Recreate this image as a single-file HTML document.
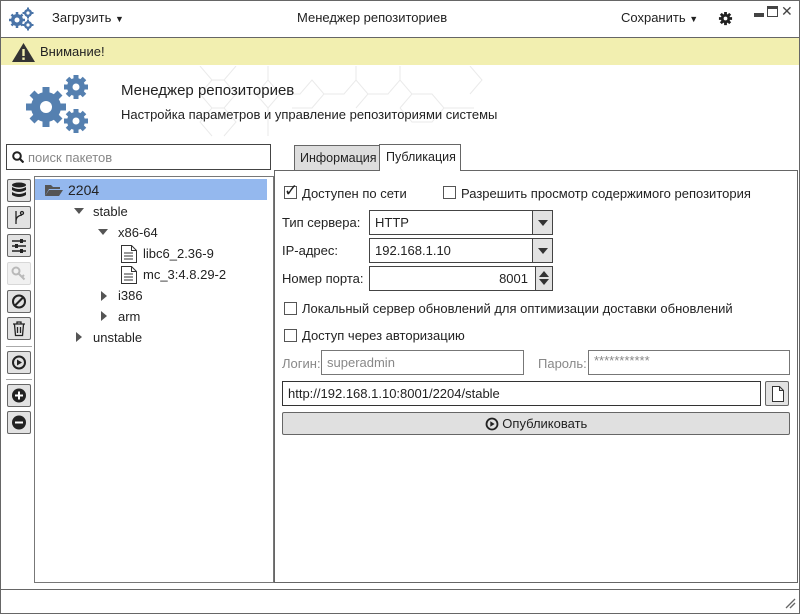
<!DOCTYPE html>
<html><head><meta charset="utf-8"><style>
*{box-sizing:border-box;margin:0;padding:0}
body{width:800px;height:614px;background:#fff;font-family:"Liberation Sans","DejaVu Sans",sans-serif;font-size:13px;color:#222;position:relative;overflow:hidden}
.a{position:absolute}
.win{left:0;top:0;width:800px;height:614px;border:1px solid #666}
.btn{position:absolute;left:7px;width:24px;height:23px;border:1px solid #666;background:#e2e2e2;border-radius:2px}
.btn svg{position:absolute;left:3px;top:2px}
.cb{position:absolute;width:13px;height:13px;border:1px solid #555;background:#fff}
.inp{position:absolute;border:1px solid #444;background:#fff;height:25px;padding:4px 5px}
.dd{position:absolute;right:0;top:0;width:20px;height:23px;border-left:1px solid #444;background:#e2e2e2}
.tri{width:0;height:0;border-left:5px solid transparent;border-right:5px solid transparent;border-top:6px solid #333;position:absolute;left:5px;top:9px}
</style></head><body>
<div class="a win"></div>
<!-- title -->
<svg class="a" style="left:8px;top:7px" width="28" height="24" viewBox="0 0 28 24"><g fill="#4a74a8"><circle cx="9" cy="13" r="6"/><circle cx="20" cy="6" r="4"/><circle cx="20" cy="18" r="4"/></g><g stroke="#4a74a8" stroke-width="2.5"><path d="M9 5v16M1 13h16M3.5 7.5l11 11M14.5 7.5l-11 11"/><path d="M20 0.5v11M14.5 6h11M20 12.5v11M14.5 18h11" stroke-width="2"/></g><g fill="#fff"><circle cx="9" cy="13" r="2.5"/><circle cx="20" cy="6" r="1.6"/><circle cx="20" cy="18" r="1.6"/></g></svg>
<div class="a" style="left:52px;top:10px">Загрузить <span style="font-size:9px">▼</span></div>
<div class="a" style="left:297px;top:10px">Менеджер репозиториев</div>
<div class="a" style="left:621px;top:10px">Сохранить <span style="font-size:9px">▼</span></div>
<svg class="a" style="left:718px;top:11px" width="15" height="15" viewBox="0 0 16 16"><circle cx="8" cy="8" r="5" fill="#222"/><g stroke="#222" stroke-width="3"><path d="M8 1v14M1 8h14M3 3l10 10M13 3L3 13"/></g><circle cx="8" cy="8" r="2" fill="#fff"/></svg>
<div class="a" style="left:754px;top:13px;width:10px;height:4px;background:#444"></div>
<div class="a" style="left:767px;top:6px;width:11px;height:11px;border:1px solid #444;border-top:3px solid #444"></div>
<div class="a" style="left:781px;top:3px;font-size:14px;color:#444">✕</div>
<div class="a" style="left:1px;top:37px;width:798px;height:1px;background:#666"></div>
<!-- warning -->
<div class="a" style="left:1px;top:38px;width:798px;height:27px;background:#f2efb0"></div>
<svg class="a" style="left:11px;top:42px" width="25" height="21"><path d="M12.5 1L24 20H1z" fill="#333"/><rect x="11.3" y="7" width="2.4" height="7" fill="#f2efb0"/><rect x="11.3" y="15.5" width="2.4" height="2.4" fill="#f2efb0"/></svg>
<div class="a" style="left:40px;top:44px">Внимание!</div>
<!-- header -->
<svg class="a" style="left:190px;top:66px" width="320" height="74" opacity=".2"><g fill="none" stroke="#999" stroke-width="1"><path d="M10 0l12 14l-12 14l12 14l-12 14l12 14M46 0l-12 14l12 14l-12 14l12 14l-12 14M22 14h12M22 42h12M46 28h20M66 28l12-14 12 14-12 14-12-14M90 28h20l12-14 12 14-12 14h-20M134 28h20l12-14 12 14-12 14M78 0v14M78 42v28M166 0v14M178 28h20l12-14 12 14-12 14M210 0v14M222 28h20l12 14-12 14h-20l-12-14M254 42h30M280 0l12 14-12 14"/></g></svg>
<svg class="a" style="left:26px;top:73px" width="66" height="62" viewBox="0 0 66 62"><g fill="#5580b0"><circle cx="20" cy="34" r="15"/><circle cx="50" cy="14" r="9"/><circle cx="50" cy="48" r="9"/><g stroke="#5580b0" stroke-width="7"><path d="M20 14v40M0 34h40M6 20l28 28M34 20L6 48"/></g><g stroke="#5580b0" stroke-width="5"><path d="M50 2v24M38 14h24M41.5 5.5l17 17M58.5 5.5l-17 17M50 36v24M38 48h24M41.5 39.5l17 17M58.5 39.5l-17 17"/></g></g><g fill="#fff"><circle cx="20" cy="34" r="6"/><circle cx="50" cy="14" r="3.5"/><circle cx="50" cy="48" r="3.5"/></g></svg>
<div class="a" style="left:121px;top:82px;font-size:15px">Менеджер репозиториев</div>
<div class="a" style="left:121px;top:107px">Настройка параметров и управление репозиториями системы</div>
<!-- search -->
<div class="a" style="left:6px;top:144px;width:265px;height:26px;border:1px solid #444"></div>
<svg class="a" style="left:12px;top:151px" width="12" height="12"><circle cx="5" cy="5" r="3.8" fill="none" stroke="#222" stroke-width="2"/><path d="M8 8l3.5 3.5" stroke="#222" stroke-width="2.2"/></svg>
<div class="a" style="left:28px;top:150px;color:#888">поиск пакетов</div>
<!-- left toolbar -->
<div class="btn" style="top:179px"><svg width="16" height="17"><g fill="#222"><ellipse cx="8" cy="3" rx="7" ry="2.5"/><path d="M1 5q7 4 14 0v3q-7 4-14 0zM1 10q7 4 14 0v3q-7 4-14 0z"/></g></svg></div>
<div class="btn" style="top:206px"><svg width="16" height="17"><g fill="none" stroke="#222" stroke-width="1.3"><path d="M5 2v13M5 12q0-5 6-6"/><circle cx="11" cy="4" r="1.5"/></g></svg></div>
<div class="btn" style="top:234px"><svg width="16" height="17"><g stroke="#222" stroke-width="1.5"><path d="M1 4h14M1 9h14M1 14h14"/></g><g fill="#222"><rect x="9" y="2" width="3" height="4"/><rect x="4" y="7" width="3" height="4"/><rect x="9" y="12" width="3" height="4"/></g></svg></div>
<div class="btn" style="top:262px;opacity:.45;border-color:#aaa"><svg width="16" height="17"><circle cx="5" cy="6" r="3.5" fill="none" stroke="#666" stroke-width="2"/><path d="M7.5 8.5l6 6M11 12l2-2" stroke="#666" stroke-width="2"/></svg></div>
<div class="btn" style="top:290px"><svg width="16" height="17"><circle cx="8" cy="8.5" r="6" fill="none" stroke="#222" stroke-width="2"/><path d="M4 12.5l8-8" stroke="#222" stroke-width="2"/></svg></div>
<div class="btn" style="top:317px"><svg width="16" height="17"><g fill="none" stroke="#222" stroke-width="1.3"><path d="M2 4h12M6 4V2h4v2M3.5 4.5l1 11h7l1-11M6.5 7v6M9.5 7v6"/></g></svg></div>
<div class="a" style="left:6px;top:346px;width:26px;height:1px;background:#aaa"></div>
<div class="btn" style="top:351px"><svg width="16" height="17"><circle cx="8" cy="8.5" r="6" fill="none" stroke="#222" stroke-width="2"/><path d="M6 5.5v6l5-3z" fill="#222"/></svg></div>
<div class="a" style="left:6px;top:379px;width:26px;height:1px;background:#aaa"></div>
<div class="btn" style="top:384px"><svg width="16" height="17"><circle cx="8" cy="8.5" r="7" fill="#222"/><path d="M4 8.5h8M8 4.5v8" stroke="#fff" stroke-width="2"/></svg></div>
<div class="btn" style="top:411px"><svg width="16" height="17"><circle cx="8" cy="8.5" r="7" fill="#222"/><path d="M4 8.5h8" stroke="#fff" stroke-width="2"/></svg></div>
<!-- tree -->
<div class="a" style="left:34px;top:176px;width:240px;height:407px;border:1px solid #777"></div>
<div class="a" style="left:35px;top:179px;width:232px;height:21px;background:#94b8ee"></div>
<svg class="a" style="left:44px;top:183px" width="20" height="14"><path d="M1 2h6l2 2h7v2H5L1 13z" fill="#555"/><path d="M5 7h14l-4 6H1z" fill="#555"/></svg>
<div class="a" style="left:68px;top:182px;font-size:14px">2204</div>
<div class="a" style="left:74px;top:208px;border-left:5px solid transparent;border-right:5px solid transparent;border-top:6px solid #555"></div>
<div class="a" style="left:93px;top:204px">stable</div>
<div class="a" style="left:98px;top:229px;border-left:5px solid transparent;border-right:5px solid transparent;border-top:6px solid #555"></div>
<div class="a" style="left:118px;top:225px">x86-64</div>
<svg class="a" style="left:120px;top:244px" width="18" height="20"><path d="M1.5 1.5h10l5 5v12h-15z M11.5 1.5v5h5" fill="#fff" stroke="#333"/><path d="M4 9h9M4 12h9M4 15h9" stroke="#333"/></svg>
<div class="a" style="left:143px;top:246px">libc6_2.36-9</div>
<svg class="a" style="left:120px;top:265px" width="18" height="20"><path d="M1.5 1.5h10l5 5v12h-15z M11.5 1.5v5h5" fill="#fff" stroke="#333"/><path d="M4 9h9M4 12h9M4 15h9" stroke="#333"/></svg>
<div class="a" style="left:143px;top:267px">mc_3:4.8.29-2</div>
<div class="a" style="left:101px;top:291px;border-top:5px solid transparent;border-bottom:5px solid transparent;border-left:6px solid #555"></div>
<div class="a" style="left:118px;top:288px">i386</div>
<div class="a" style="left:101px;top:311px;border-top:5px solid transparent;border-bottom:5px solid transparent;border-left:6px solid #555"></div>
<div class="a" style="left:118px;top:309px">arm</div>
<div class="a" style="left:76px;top:332px;border-top:5px solid transparent;border-bottom:5px solid transparent;border-left:6px solid #555"></div>
<div class="a" style="left:93px;top:330px">unstable</div>
<!-- tabs -->
<div class="a" style="left:294px;top:145px;width:86px;height:26px;border:1px solid #666;background:#ddd;padding:5px 0 0 5px;font-size:12.5px;white-space:nowrap;overflow:hidden">Информация</div>
<div class="a" style="left:379px;top:144px;width:82px;height:27px;border:1px solid #666;border-bottom:none;background:#fff;padding:5px 0 0 6px;font-size:12.5px;z-index:2;white-space:nowrap">Публикация</div>
<div class="a" style="left:274px;top:170px;width:524px;height:413px;border:1px solid #666"></div>
<!-- form -->
<div class="cb" style="left:284px;top:186px"></div>
<div class="a" style="left:284px;top:181px;font-size:17px">✓</div>
<div class="a" style="left:302px;top:186px">Доступен по сети</div>
<div class="cb" style="left:443px;top:186px"></div>
<div class="a" style="left:461px;top:186px">Разрешить просмотр содержимого репозитория</div>
<div class="a" style="left:282px;top:215px">Тип сервера:</div>
<div class="inp" style="left:369px;top:210px;width:184px">HTTP<div class="dd"><div class="tri"></div></div></div>
<div class="a" style="left:282px;top:243px">IP-адрес:</div>
<div class="inp" style="left:369px;top:238px;width:184px">192.168.1.10<div class="dd"><div class="tri"></div></div></div>
<div class="a" style="left:282px;top:271px">Номер порта:</div>
<div class="inp" style="left:369px;top:266px;width:184px;text-align:right;padding-right:24px">8001<div class="dd" style="width:17px"><div class="a" style="left:3px;top:4px;border-left:5px solid transparent;border-right:5px solid transparent;border-bottom:6px solid #333"></div><div class="a" style="left:3px;top:12px;border-left:5px solid transparent;border-right:5px solid transparent;border-top:6px solid #333"></div></div></div>
<div class="cb" style="left:284px;top:302px"></div>
<div class="a" style="left:302px;top:301px">Локальный сервер обновлений для оптимизации доставки обновлений</div>
<div class="cb" style="left:284px;top:329px"></div>
<div class="a" style="left:302px;top:328px">Доступ через авторизацию</div>
<div class="a" style="left:282px;top:356px;color:#888">Логин:</div>
<div class="inp" style="left:321px;top:350px;width:203px;color:#888;border-color:#777">superadmin</div>
<div class="a" style="left:538px;top:356px;color:#888">Пароль:</div>
<div class="inp" style="left:588px;top:350px;width:202px;color:#888;border-color:#777;padding-top:2px">***********</div>
<div class="inp" style="left:282px;top:381px;width:479px;border-color:#333">http://192.168.1.10:8001/2204/stable</div>
<div class="a" style="left:765px;top:381px;width:24px;height:25px;border:1px solid #666;background:#e2e2e2;border-radius:2px"><svg style="position:absolute;left:5px;top:3px" width="14" height="18"><path d="M1.5 1.5h7l4 4v11h-11z M8.5 1.5v4h4" fill="#fff" stroke="#333"/></svg></div>
<div class="a" style="left:282px;top:412px;width:508px;height:23px;border:1px solid #666;background:#e0e0e0;border-radius:2px;text-align:center;padding-top:3px"><svg style="vertical-align:-3px" width="14" height="14"><circle cx="7" cy="7" r="5.5" fill="none" stroke="#222" stroke-width="1.8"/><path d="M5.3 4.2v5.6l4.3-2.8z" fill="#222"/></svg> Опубликовать</div>
<!-- status -->
<div class="a" style="left:1px;top:589px;width:798px;height:1px;background:#666"></div>
<svg class="a" style="left:784px;top:597px" width="12" height="12"><path d="M2 11l9-9M6 11l5-5" stroke="#666" stroke-width="1.3"/></svg>
</body></html>
